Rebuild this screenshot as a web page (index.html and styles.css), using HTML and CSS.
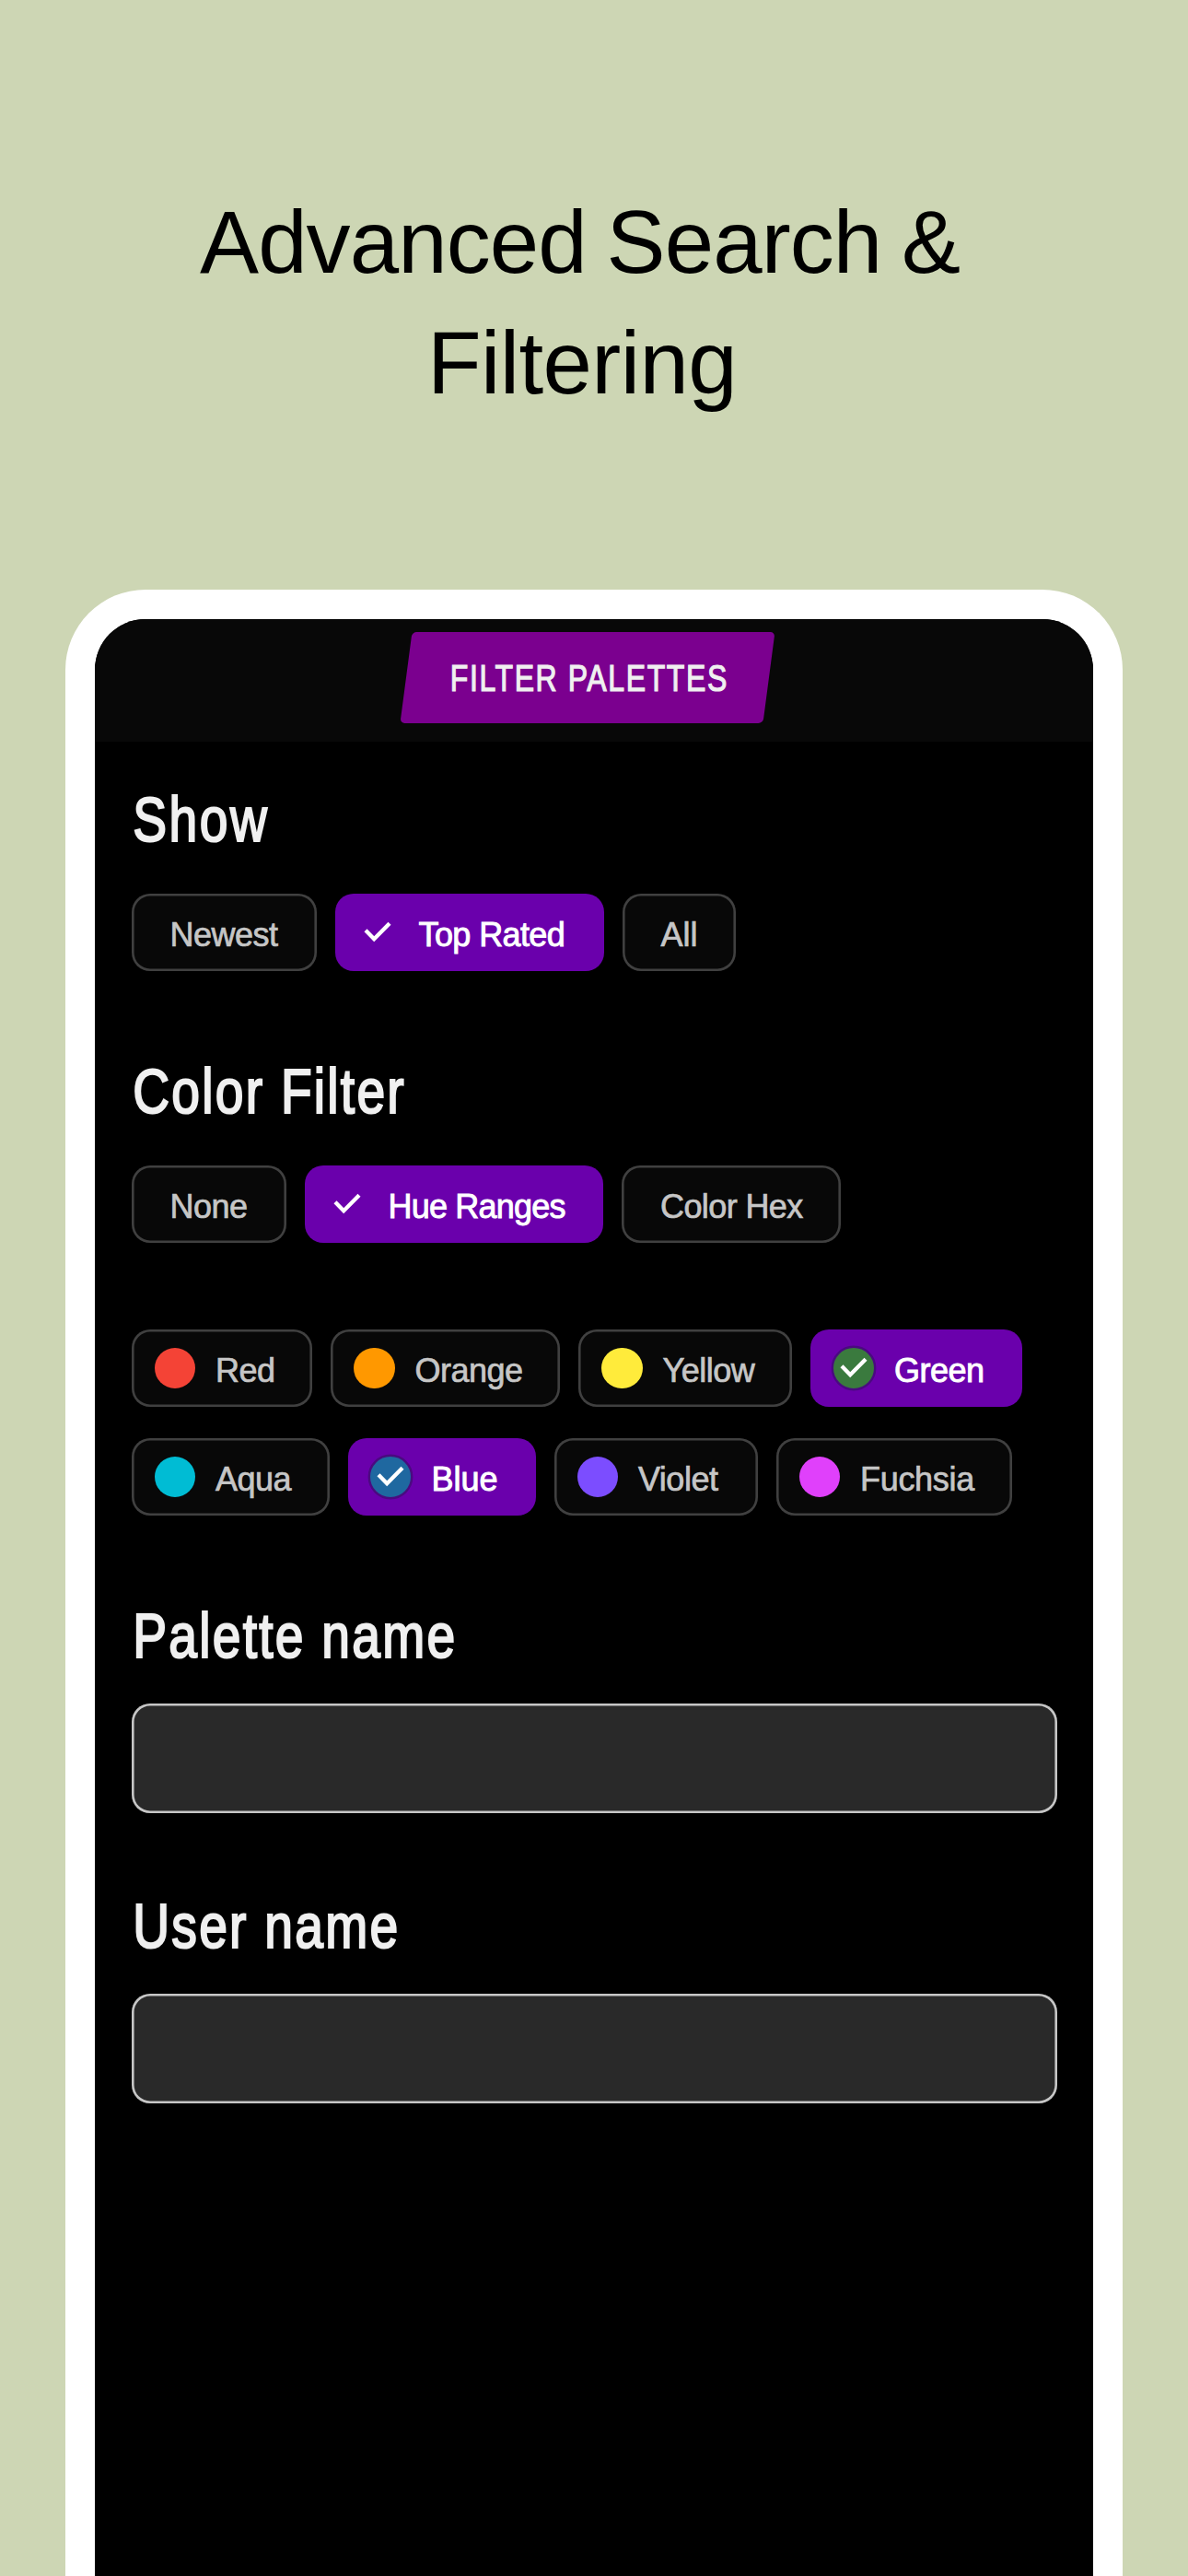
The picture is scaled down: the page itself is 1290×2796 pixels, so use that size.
FILE: index.html
```
<!DOCTYPE html>
<html lang="en">
<head>
<meta charset="utf-8">
<title>Advanced Search &amp; Filtering</title>
<link rel="stylesheet" href="styles.css">
</head>
<body>
<h1 class="headline"><span class="line line-one">Advanced Search &amp;</span><span class="line line-two">Filtering</span></h1>
<main class="phone">
  <header class="topbar">
    <div class="badge"><span class="badge-text">FILTER PALETTES</span></div>
  </header>
  <div class="content">
    <section class="group show">
      <h2 class="title title-show">Show</h2>
      <div class="chips">
        <button class="chip newest">Newest</button>
        <button class="chip selected top-rated"><svg class="check" viewBox="0 0 50 50"><path d="M12 22.7 21.2 32.2 38 15.2"/></svg>Top Rated</button>
        <button class="chip all">All</button>
      </div>
    </section>
    <section class="group color">
      <h2 class="title">Color Filter</h2>
      <div class="chips">
        <button class="chip none">None</button>
        <button class="chip selected hue"><svg class="check" viewBox="0 0 50 50"><path d="M12 22.7 21.2 32.2 38 15.2"/></svg>Hue Ranges</button>
        <button class="chip hex">Color Hex</button>
      </div>
      <div class="chips swatches">
        <button class="chip red"><i class="dot"></i>Red</button>
        <button class="chip orange"><i class="dot"></i>Orange</button>
        <button class="chip yellow"><i class="dot"></i>Yellow</button>
        <button class="chip selected green"><svg class="check" viewBox="0 0 50 50"><circle cx="25" cy="25" r="23.2"/><path d="M12 22.7 21.2 32.2 38 15.2"/></svg>Green</button>
      </div>
      <div class="chips swatches second">
        <button class="chip aqua"><i class="dot"></i>Aqua</button>
        <button class="chip selected blue"><svg class="check" viewBox="0 0 50 50"><circle cx="25" cy="25" r="23.2"/><path d="M12 22.7 21.2 32.2 38 15.2"/></svg>Blue</button>
        <button class="chip violet"><i class="dot"></i>Violet</button>
        <button class="chip fuchsia"><i class="dot"></i>Fuchsia</button>
      </div>
    </section>
    <section class="group field">
      <h2 class="title">Palette name</h2>
      <input class="input" type="text" aria-label="Palette name">
    </section>
    <section class="group field user">
      <h2 class="title">User name</h2>
      <input class="input" type="text" aria-label="User name">
    </section>
  </div>
</main>
</body>
</html>
```
FILE: styles.css
```
* { box-sizing: border-box; }

body {
  margin: 0;
  width: 1290px;
  height: 2796px;
  overflow: hidden;
  background: #cdd6b4;
  font-family: "Liberation Sans", Arial, sans-serif;
  display: flex;
  flex-direction: column;
}

.headline {
  margin: 0;
  padding-top: 197px;
  height: 640px;
  flex: none;
  font-size: 96px;
  font-weight: 400;
  line-height: 131px;
  color: #000;
}
.line { display: block; white-space: nowrap; }
.line-one { padding-left: 217px; letter-spacing: -0.9px; word-spacing: -4px; }
.line-two { padding-left: 464px; letter-spacing: -0.6px; }

.phone {
  flex: 1;
  margin: 0 71px;
  border: 32px solid #fff;
  border-bottom: 0;
  border-radius: 87px 87px 0 0;
  background: #000;
  overflow: hidden;
}

.topbar {
  height: 133px;
  padding: 14px 14px 0 0;
  display: flex;
  justify-content: center;
  align-items: flex-start;
  background: #080808;
}
.badge {
  width: 393.5px;
  height: 98.5px;
  padding-left: 47.5px;
  border-radius: 5px;
  background: #7b008f;
  transform: skewX(-7.5deg);
}
.badge-text {
  display: inline-block;
  transform: skewX(7.5deg) scaleX(0.8);
  transform-origin: 0 50%;
  white-space: nowrap;
  font-size: 40px;
  line-height: 101px;
  letter-spacing: 2px;
  color: #f0f0f0;
  -webkit-text-stroke: 1.2px #f0f0f0;
}

.content { padding: 45px 39px 0 39.5px; }
.group { display: flex; flex-direction: column; }
.title {
  margin: 0 0 40px;
  padding-left: 1.5px;
  font-size: 69px;
  font-weight: 400;
  line-height: 80px;
  letter-spacing: 2.8px;
  color: #f0f0f0;
  -webkit-text-stroke: 2.2px #f0f0f0;
  transform: scaleX(0.8);
  transform-origin: 0 50%;
  white-space: nowrap;
}
.title-show { letter-spacing: 3.2px; }
.color { margin-top: 91px; }
.color .title { margin-bottom: 40px; }
.field { margin-top: 91px; }
.field .title { margin-bottom: 33px; }
.user { margin-top: 83px; }

.chips { display: flex; gap: 20px; height: 84px; }
.swatches { margin-top: 94px; }
.second { margin-top: 34px; }

.chip {
  flex: none;
  display: flex;
  align-items: center;
  height: 84px;
  padding: 6px 0 0 42px;
  border: 0;
  border-radius: 20px;
  background: #080808;
  box-shadow: inset 0 0 0 2.6px #404040;
  font-family: inherit;
  font-size: 36px;
  line-height: 78px;
  letter-spacing: -0.5px;
  white-space: nowrap;
  color: #c6c6c6;
  -webkit-text-stroke: 0.7px #c6c6c6;
}
.selected {
  padding-left: 21.5px;
  background: #6a00ac;
  box-shadow: none;
  color: #fff;
  -webkit-text-stroke: 0.9px #fff;
}
.check {
  width: 50px;
  height: 50px;
  margin: -6px 19.5px 0 0;
  fill: none;
}
.check path { stroke: #fff; stroke-width: 4.3; }
.check circle { stroke: #4a0a80; stroke-width: 2.4; }
.green circle { fill: #3a7a3e; }
.blue circle { fill: #1f68a0; }

.dot {
  width: 44.5px;
  height: 44.5px;
  margin: -6px 22px 0 -17px;
  border-radius: 50%;
}
.red .dot { background: #f44336; }
.orange .dot { background: #ff9800; }
.yellow .dot { background: #ffeb3b; }
.aqua .dot { background: #00bcd4; }
.violet .dot { background: #7c4dff; }
.fuchsia .dot { background: #e040fb; }

.newest { width: 201px; }
.top-rated { width: 292px; letter-spacing: -0.6px; }
.all { width: 123.5px; letter-spacing: 0; }
.none { width: 168px; }
.hue { width: 324.5px; letter-spacing: -0.8px; }
.hex { width: 238px; letter-spacing: -0.6px; }
.red { width: 196.5px; }
.orange { width: 249px; }
.yellow { width: 232px; }
.green { width: 229.5px; }
.aqua { width: 215px; }
.blue { width: 204px; letter-spacing: 0; }
.violet { width: 221px; }
.fuchsia { width: 256px; letter-spacing: -0.3px; }

.input {
  width: 1005px;
  height: 119px;
  padding: 0 24px;
  border: 0;
  border-radius: 20px;
  outline: 0;
  background: #292929;
  box-shadow: inset 0 0 0 2.6px #c6c6c6;
  font: 36px "Liberation Sans", Arial, sans-serif;
  color: #f0f0f0;
}
```
